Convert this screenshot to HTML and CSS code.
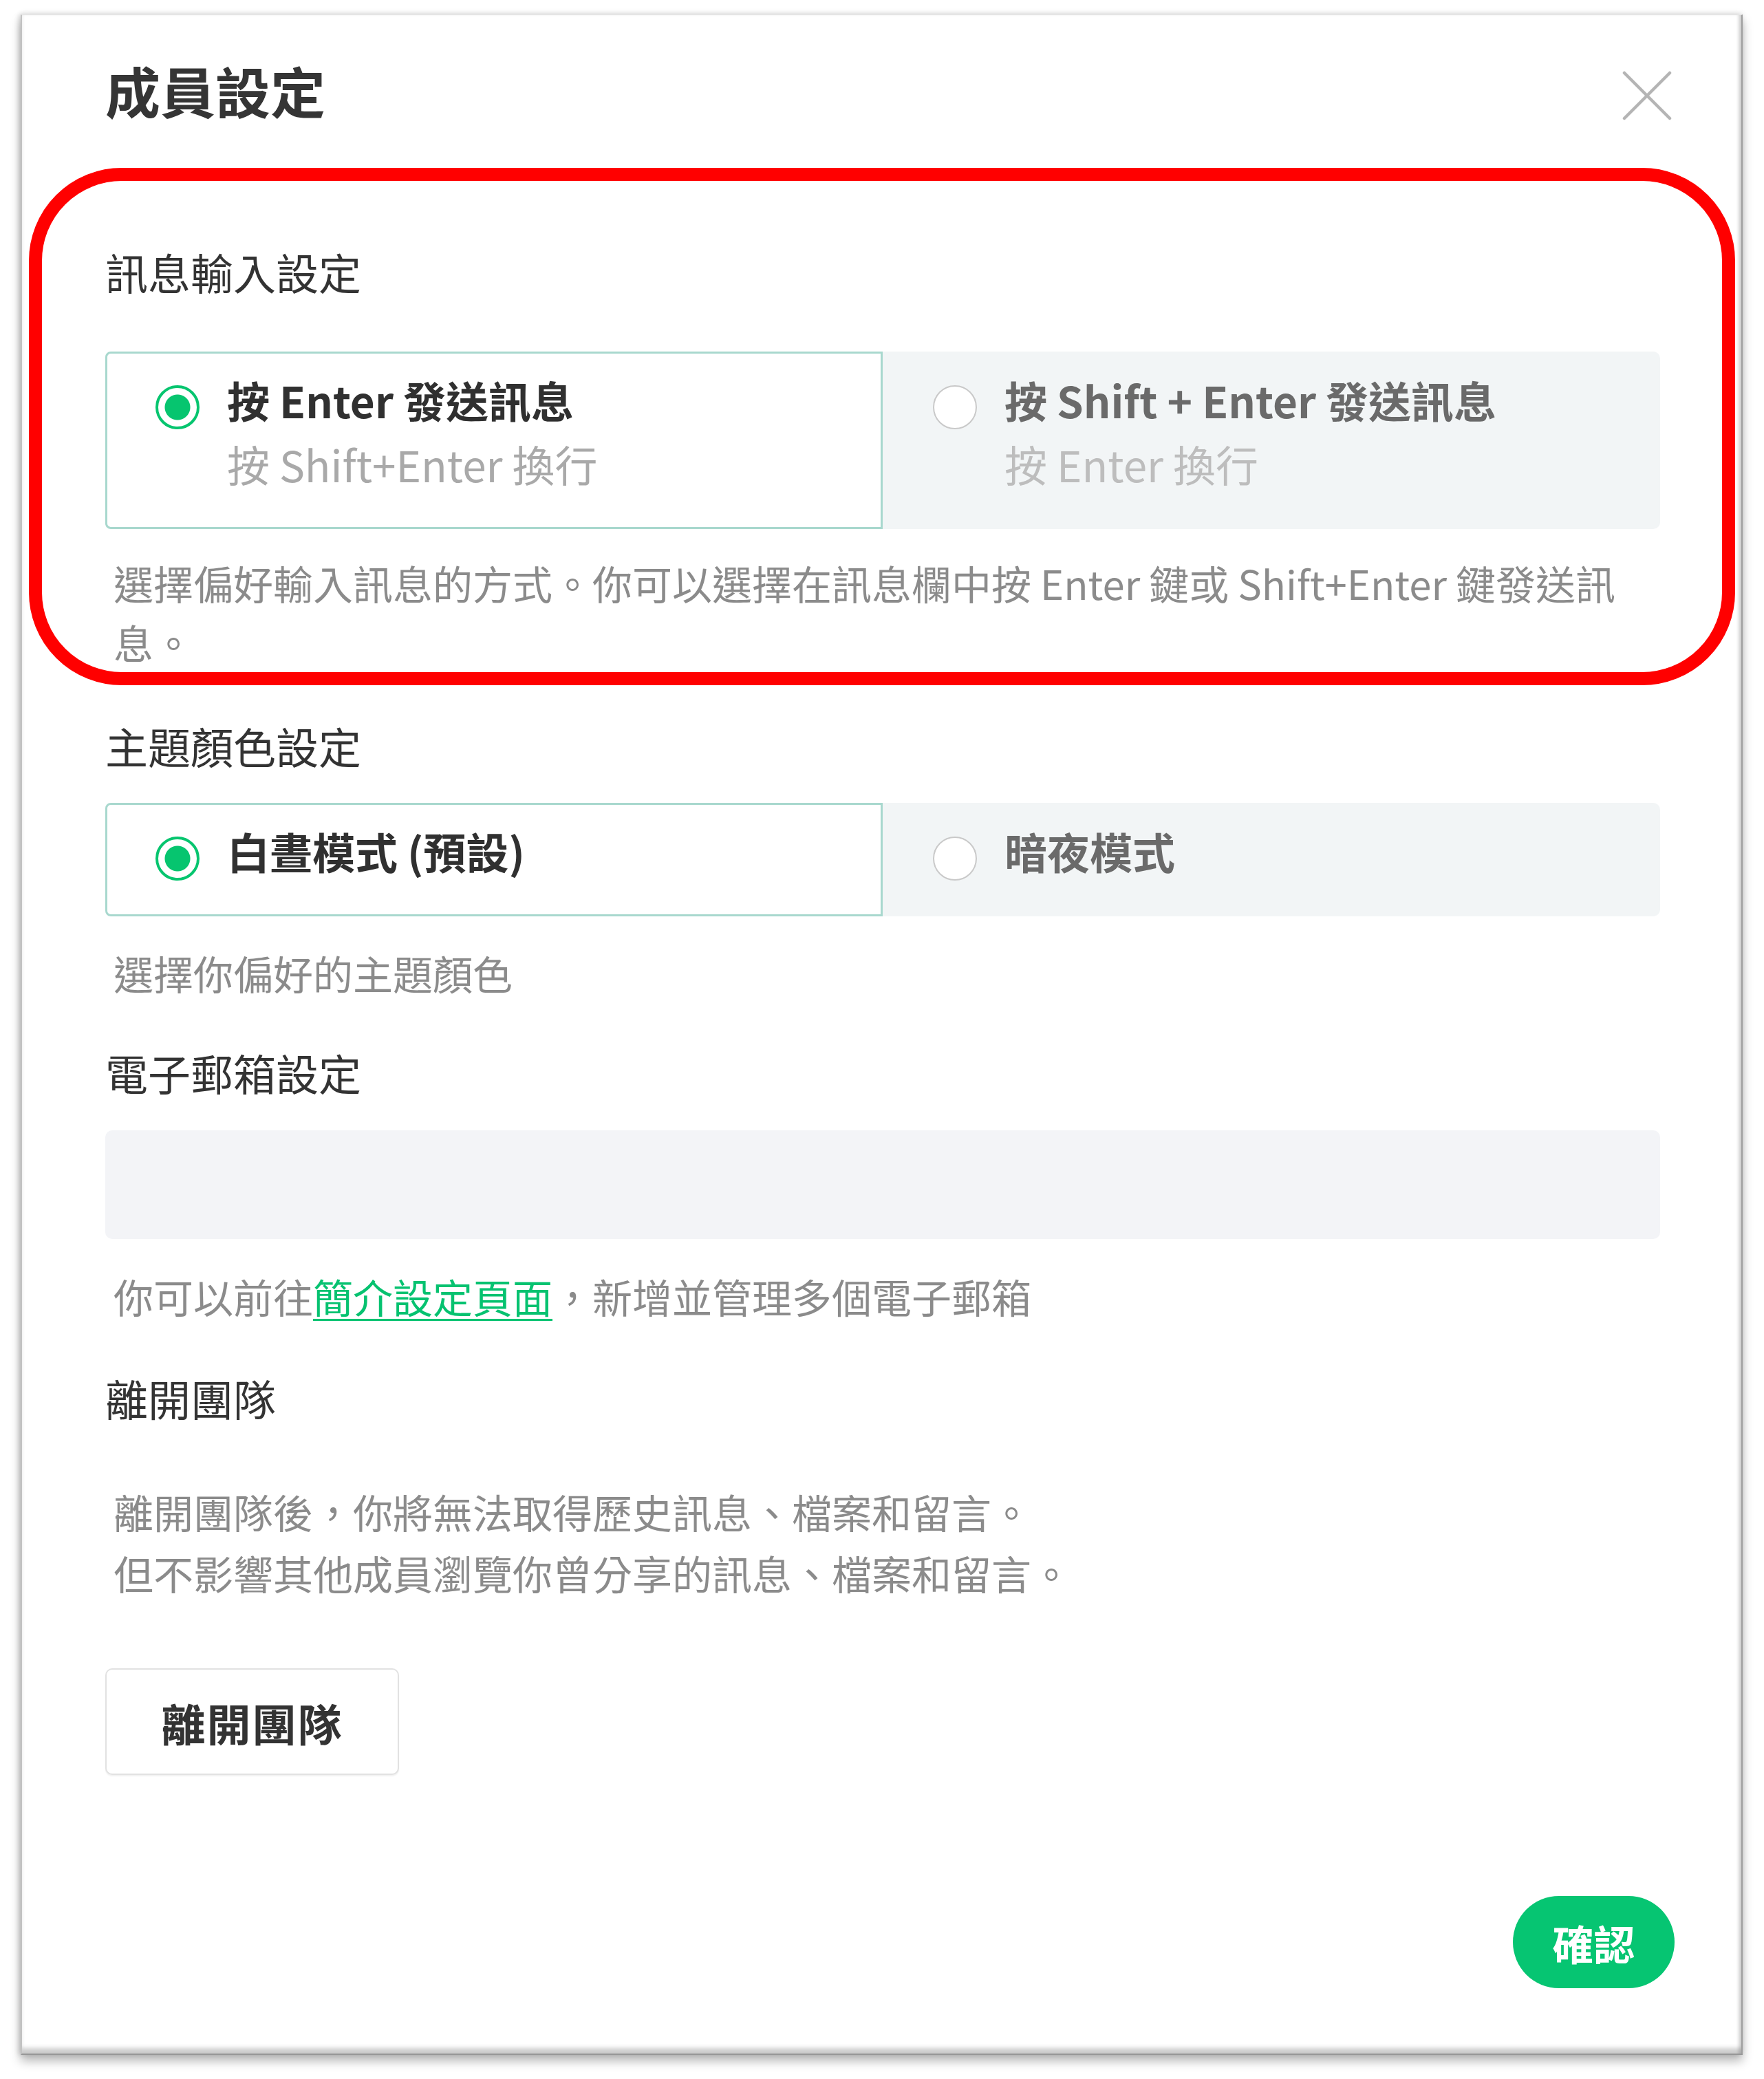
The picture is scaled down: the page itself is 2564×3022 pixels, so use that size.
FILE: index.html
```html
<!DOCTYPE html>
<html lang="zh-Hant">
<head>
<meta charset="utf-8">
<title>成員設定</title>
<link rel="stylesheet" href="styles.css">
</head>
<body>
<div class="frame">
  <div class="dialog">
    <header class="hd">
      <h1 class="title">成員設定</h1>
      <button class="close" aria-label="關閉">
        <svg width="72" height="72" viewBox="0 0 72 72"><path d="M3 3 L69 69 M69 3 L3 69" stroke="#b4b4b4" stroke-width="4.5" stroke-linecap="round" fill="none"/></svg>
      </button>
    </header>

    <section class="sec s-input">
      <h2 class="sec-title">訊息輸入設定</h2>
      <div class="seg">
        <label class="opt is-on">
          <span class="radio"></span>
          <span class="opt-text">
            <span class="opt-main">按 Enter 發送訊息</span>
            <span class="opt-sub">按 Shift+Enter 換行</span>
          </span>
        </label>
        <label class="opt">
          <span class="radio"></span>
          <span class="opt-text">
            <span class="opt-main">按 Shift + Enter 發送訊息</span>
            <span class="opt-sub">按 Enter 換行</span>
          </span>
        </label>
      </div>
      <p class="desc">選擇偏好輸入訊息的方式。你可以選擇在訊息欄中按 Enter 鍵或 Shift+Enter 鍵發送訊息。</p>
    </section>

    <section class="sec s-theme">
      <h2 class="sec-title">主題顏色設定</h2>
      <div class="seg">
        <label class="opt is-on">
          <span class="radio"></span>
          <span class="opt-text"><span class="opt-main">白晝模式 (預設)</span></span>
        </label>
        <label class="opt">
          <span class="radio"></span>
          <span class="opt-text"><span class="opt-main">暗夜模式</span></span>
        </label>
      </div>
      <p class="desc">選擇你偏好的主題顏色</p>
    </section>

    <section class="sec s-email">
      <h2 class="sec-title">電子郵箱設定</h2>
      <div class="field"></div>
      <p class="desc">你可以前往<a class="link" href="#">簡介設定頁面</a>，新增並管理多個電子郵箱</p>
    </section>

    <section class="sec s-leave">
      <h2 class="sec-title">離開團隊</h2>
      <p class="desc desc-leave">離開團隊後，你將無法取得歷史訊息、檔案和留言。<br>但不影響其他成員瀏覽你曾分享的訊息、檔案和留言。</p>
      <button class="btn-leave">離開團隊</button>
    </section>

    <footer class="ft">
      <button class="btn-ok">確認</button>
    </footer>
  </div>
</div>
<div class="mark"></div>
</body>
</html>
```

FILE: styles.css
```css
html, body {
  margin: 0;
  padding: 0;
  background: #ffffff;
}

body {
  position: relative;
  width: 2564px;
  height: 3022px;
  overflow: hidden;
  font-family: "Noto Sans CJK TC", "Noto Sans", sans-serif;
  color: #333333;
}

.frame {
  box-sizing: border-box;
  width: 2503px;
  margin: 21px 0 0 30px;
  background: #ffffff;
  border-top: 1px solid #e6e6e6;
  border-left: 2px solid #c2c2c2;
  border-right: 2px solid #9e9e9e;
  border-bottom: 2px solid #979797;
  box-shadow:
    inset -6px 0 4px -2px rgba(0, 0, 0, 0.16),
    inset 0 -10px 6px -2px rgba(0, 0, 0, 0.2),
    0 9px 14px rgba(0, 0, 0, 0.28),
    -3px 0 7px rgba(0, 0, 0, 0.12),
    0 -3px 8px rgba(0, 0, 0, 0.05);
}

.dialog {
  padding: 64px 118px 95px 121px;
}

/* header */
.hd {
  display: flex;
  justify-content: space-between;
  align-items: flex-start;
  height: 88px;
}

.title {
  margin: 0;
  font-size: 80px;
  line-height: 88px;
  font-weight: 700;
  color: #353535;
}

.close {
  width: 72px;
  height: 72px;
  margin: 17px -17px 0 0;
  padding: 0;
  border: 0;
  background: none;
  display: flex;
}

/* sections */
.sec-title {
  margin: 0;
  font-size: 62px;
  line-height: 88px;
  font-weight: 400;
  color: #333333;
}

.s-input { margin-top: 177px; }
.s-theme { margin-top: 64px; }
.s-email { margin-top: 58px; }
.s-leave { margin-top: 61px; }

.s-input .seg { margin-top: 72px; }
.s-input .desc { margin-top: 35px; }
.s-theme .seg { margin-top: 39px; }
.s-theme .desc { margin-top: 39px; }

/* segmented options */
.seg {
  display: grid;
  grid-template-columns: 1fr 1fr;
}

.opt {
  display: flex;
  align-items: flex-start;
  padding: 23px 40px 48px 70px;
  border: 3px solid transparent;
  background: #f2f5f6;
  border-radius: 0 10px 10px 0;
}

.opt.is-on {
  background: #ffffff;
  border-color: #a8d8ce;
  border-radius: 8px 0 0 8px;
}

.radio {
  flex: none;
  box-sizing: border-box;
  width: 64px;
  height: 64px;
  margin: 23px 40px 0 0;
  border-radius: 50%;
  border: 2px solid #c9c9c9;
  background: #ffffff;
}

.is-on .radio {
  border: 4px solid #06c56f;
  background: radial-gradient(circle, #06c56f 0 18px, #ffffff 19px);
}

.opt-text {
  display: flex;
  flex-direction: column;
}

.opt-main {
  font-size: 62px;
  line-height: 88px;
  font-weight: 700;
  color: #6a6a6a;
}

.opt-sub {
  margin-top: 5px;
  font-size: 62px;
  line-height: 88px;
  font-weight: 400;
  color: #bdbdbd;
}

.is-on .opt-main { color: #303030; }
.is-on .opt-sub { color: #a9a9a9; }

/* descriptions */
.desc {
  margin: 0;
  padding: 0 40px 0 12px;
  font-size: 58px;
  line-height: 86px;
  color: #8b8b8b;
}

.field {
  margin-top: 40px;
  height: 158px;
  border-radius: 10px;
  background: #f3f4f7;
}

.s-email .desc { margin-top: 41px; line-height: 85px; }

.link {
  color: #06c270;
  text-decoration: underline;
  text-decoration-thickness: 3px;
  text-underline-offset: 8px;
}

.desc-leave {
  margin-top: 77px;
  line-height: 89px;
}

.btn-leave {
  display: block;
  box-sizing: border-box;
  width: 427px;
  height: 155px;
  margin-top: 94px;
  padding: 0;
  border: 2px solid #e2e2e2;
  border-radius: 10px;
  background: #ffffff;
  box-shadow: 0 2px 2px rgba(0, 0, 0, 0.06);
  font-family: inherit;
  font-size: 64px;
  font-weight: 700;
  letter-spacing: 2px;
  color: #333333;
}

/* footer */
.ft {
  display: flex;
  justify-content: flex-end;
  margin: 176px -21px 0 0;
}

.btn-ok {
  width: 235px;
  height: 134px;
  padding: 0;
  border: 0;
  border-radius: 67px;
  background: #06c572;
  font-family: inherit;
  font-size: 60px;
  font-weight: 700;
  color: #ffffff;
}

/* red annotation outline */
.mark {
  position: absolute;
  left: 42px;
  top: 244px;
  width: 2480px;
  height: 752px;
  box-sizing: border-box;
  border: 19px solid #ff0000;
  border-radius: 135px;
  pointer-events: none;
}
```
